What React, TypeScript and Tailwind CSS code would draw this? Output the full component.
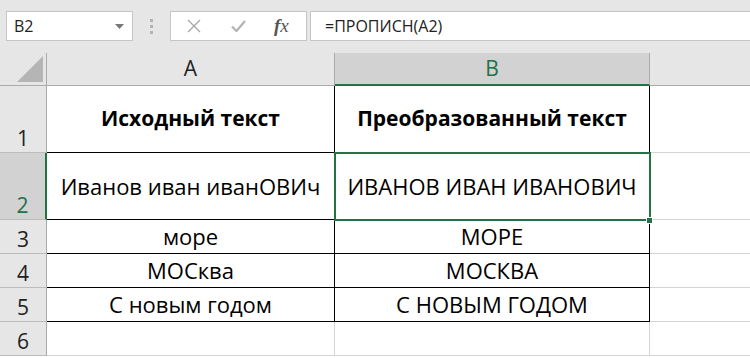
import React from "react"

const cellFont = { fontFamily: '"Open Sans", "Noto Sans", sans-serif' }

const rows = [
  { n: "1", a: "Исходный текст", b: "Преобразованный текст", h: "h-[67px]", bold: true },
  { n: "2", a: "Иванов иван иванОВИч", b: "ИВАНОВ ИВАН ИВАНОВИЧ", h: "h-[67px]" },
  { n: "3", a: "море", b: "МОРЕ", h: "h-[34px]" },
  { n: "4", a: "МОСква", b: "МОСКВА", h: "h-[34px]" },
  { n: "5", a: "С новым годом", b: "С НОВЫМ ГОДОМ", h: "h-[34px]" },
  { n: "6", a: "", b: "", h: "h-[34px]" },
]

const FormulaBar = () => (
  <div className="flex h-[53px] items-start bg-[#e6e6e6] pt-[11px] text-[16px] text-[#222]" style={cellFont}>
    <div className="ml-[6px] flex h-[30px] w-[127px] items-center justify-between border border-[#c6c6c6] bg-white pl-[7px] pr-[8px]">
      <span>B2</span>
      <svg width="9" height="5" viewBox="0 0 9 5"><path d="M0 0h9L4.5 5z" fill="#777" /></svg>
    </div>
    <div className="flex h-[30px] w-[37px] flex-col items-center justify-center gap-[3px]">
      <div className="h-[3px] w-[3px] bg-[#b3b3b3]" />
      <div className="h-[3px] w-[3px] bg-[#b3b3b3]" />
      <div className="h-[3px] w-[3px] bg-[#b3b3b3]" />
    </div>
    <div className="flex h-[30px] w-[137px] items-center border border-[#c6c6c6] bg-white">
      <svg className="ml-[16px]" width="14" height="14" viewBox="0 0 14 14">
        <path d="M1 1l12 12M13 1L1 13" stroke="#a6a6a6" strokeWidth="1.3" fill="none" />
      </svg>
      <svg className="ml-[30px]" width="15" height="12" viewBox="0 0 15 12">
        <path d="M1 6.5l4.5 4.5L14 1" stroke="#b4b4b4" strokeWidth="2.2" fill="none" />
      </svg>
      <span className="ml-[28px] text-[19px] italic text-[#555]" style={{ fontFamily: '"Liberation Serif", serif' }}>
        <span className="font-bold">f</span>x
      </span>
    </div>
    <div className="ml-[3px] flex h-[30px] flex-1 items-center border border-r-0 border-[#c6c6c6] bg-white pl-[14px]">
      =ПРОПИСН(A2)
    </div>
  </div>
)

const App = () => {
  return (
    <div className="relative h-[358px] w-[750px] overflow-hidden bg-white" style={cellFont}>
      <FormulaBar />

      <div className="grid grid-cols-[47px_288px_315px_100px] text-[21px]">
        {/* column headers */}
        <div className="relative h-[33px] border-r border-b border-[#ababab] bg-[#e6e6e6]">
          <svg className="absolute bottom-[3px] right-[3px]" width="26" height="26" viewBox="0 0 26 26">
            <path d="M26 0V26H0z" fill="#b5b5b5" />
          </svg>
        </div>
        <div className="flex h-[33px] items-center justify-center border-r border-b border-[#ababab] bg-[#e6e6e6] text-[#222]">A</div>
        <div className="flex h-[33px] items-center justify-center border-r border-[#ababab] border-b-2 border-b-[#217346] bg-[#d2d2d2] text-[#217346]">B</div>
        <div className="h-[33px] border-b border-[#ababab] bg-[#e6e6e6]" />

        {rows.map((r) => {
          const sel = r.n === "2"
          const inTable = r.n !== "6"
          return (
            <React.Fragment key={r.n}>
              <div
                className={`flex ${r.h} items-end justify-center leading-[28px] border-b border-[#bcbcbc] ${
                  sel ? "bg-[#d2d2d2] text-[#217346] border-r-2 border-r-[#217346]" : "bg-[#e6e6e6] text-[#222] border-r border-r-[#ababab]"
                }`}
              >
                {r.n}
              </div>
              <div
                className={`flex ${r.h} items-center justify-center whitespace-nowrap text-black ${
                  inTable ? "border-r border-b border-black" : "border-r border-b border-[#d4d4d4]"
                } ${r.bold ? "font-bold text-[21px]" : "text-[22px]"}`}
              >
                {r.a}
              </div>
              <div
                className={`flex ${r.h} items-center justify-center whitespace-nowrap text-black ${
                  inTable ? "border-r border-b border-black" : "border-r border-b border-[#d4d4d4]"
                } ${r.bold ? "font-bold text-[21px]" : "text-[22px]"}`}
              >
                {r.b}
              </div>
              <div className={`${r.h} border-b border-[#d4d4d4]`} />
            </React.Fragment>
          )
        })}
      </div>

      {/* selection box on B2 */}
      <div className="pointer-events-none absolute left-[334px] top-[152px] h-[69px] w-[317px] border-2 border-[#217346]" />
      <div className="pointer-events-none absolute left-[646px] top-[217px] h-[7px] w-[7px] border border-white bg-[#217346]" />
    </div>
  )
}

export default App
